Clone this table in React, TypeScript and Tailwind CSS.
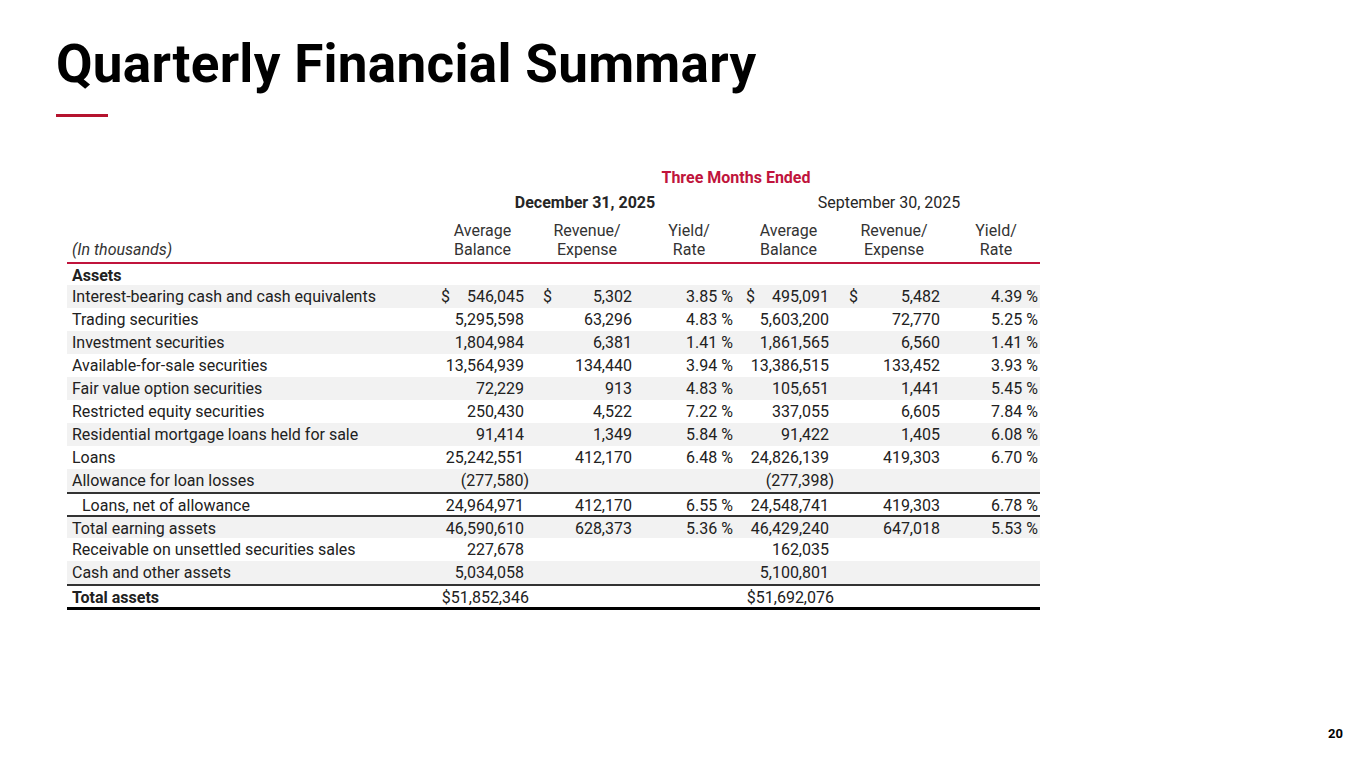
import React from "react";

const cols = "grid grid-cols-[365px_98px_108px_100px_98px_110px_94px]";

type Row = {
  label: string;
  v: (string | null)[];
  dollar?: boolean[];
  bg?: boolean;
  border?: boolean;
  bold?: boolean;
  indent?: boolean;
};

const rows: Row[] = [
  { label: "Interest-bearing cash and cash equivalents", v: ["546,045", "5,302", "3.85 %", "495,091", "5,482", "4.39 %"], dollar: [true, true, false, true, true, false], bg: true },
  { label: "Trading securities", v: ["5,295,598", "63,296", "4.83 %", "5,603,200", "72,770", "5.25 %"] },
  { label: "Investment securities", v: ["1,804,984", "6,381", "1.41 %", "1,861,565", "6,560", "1.41 %"], bg: true },
  { label: "Available-for-sale securities", v: ["13,564,939", "134,440", "3.94 %", "13,386,515", "133,452", "3.93 %"] },
  { label: "Fair value option securities", v: ["72,229", "913", "4.83 %", "105,651", "1,441", "5.45 %"], bg: true },
  { label: "Restricted equity securities", v: ["250,430", "4,522", "7.22 %", "337,055", "6,605", "7.84 %"] },
  { label: "Residential mortgage loans held for sale", v: ["91,414", "1,349", "5.84 %", "91,422", "1,405", "6.08 %"], bg: true },
  { label: "Loans", v: ["25,242,551", "412,170", "6.48 %", "24,826,139", "419,303", "6.70 %"] },
  { label: "Allowance for loan losses", v: ["(277,580)", null, null, "(277,398)", null, null], bg: true },
  { label: "Loans, net of allowance", v: ["24,964,971", "412,170", "6.55 %", "24,548,741", "419,303", "6.78 %"], border: true, indent: true },
  { label: "Total earning assets", v: ["46,590,610", "628,373", "5.36 %", "46,429,240", "647,018", "5.53 %"], border: true, bg: true },
  { label: "Receivable on unsettled securities sales", v: ["227,678", null, null, "162,035", null, null] },
  { label: "Cash and other assets", v: ["5,034,058", null, null, "5,100,801", null, null], bg: true },
  { label: "Total assets", v: ["$51,852,346", null, null, "$51,692,076", null, null], border: true, bold: true },
];

const cellPad = [
  { pl: "pl-[9px]", pr: "pr-[6px]" },
  { pl: "pl-[13px]", pr: "pr-[6px]" },
  { pl: "pl-[0px]", pr: "pr-[5px]" },
  { pl: "pl-[8px]", pr: "pr-[7px]" },
  { pl: "pl-[13px]", pr: "pr-[6px]" },
  { pl: "pl-[0px]", pr: "pr-[2px]" },
];

function Cell({ value, dollar, idx }: { value: string | null; dollar?: boolean; idx: number }) {
  const p = cellPad[idx];
  if (!value) return <div />;
  const hang = value.startsWith("(") || value.startsWith("$");
  return (
    <div className={`flex justify-between items-center whitespace-nowrap ${p.pl} ${p.pr}`}>
      <span>{dollar ? "$" : ""}</span>
      <span className={hang ? "mr-[-5px]" : ""}>{value}</span>
    </div>
  );
}

export default function App() {
  return (
    <div
      className="w-[1365px] h-[769px] bg-white relative overflow-hidden text-[#212121]"
      style={{ fontFamily: "Roboto, 'Noto Sans', sans-serif" }}
    >
      <div className="pl-[56px] pt-[38px]">
        <h1 className="text-[53px] leading-[53px] font-bold text-black tracking-[0.3px] whitespace-nowrap">
          Quarterly Financial Summary
        </h1>
        <div className="mt-[23px] w-[52px] h-[3px] bg-[#b5132e]" />
      </div>

      <div className="ml-[67px] mt-[48px] w-[973px] text-[16px]">
        <div className={`${cols} h-[26px] items-center`}>
          <div />
          <div className="col-span-6 text-center font-bold text-[#c0143c]">Three Months Ended</div>
        </div>
        <div className={`${cols} h-[24px] items-center text-[#262626]`}>
          <div />
          <div className="col-span-3 text-center font-bold">December 31, 2025</div>
          <div className="col-span-3 text-center">September 30, 2025</div>
        </div>
        <div className={`${cols} h-[47px] items-end leading-[19px] pb-[3px] text-[#333]`}>
          <div className="pl-[5px] italic">(In thousands)</div>
          <div className="text-center pl-[3px]">Average<br />Balance</div>
          <div className="text-center pl-[6px]">Revenue/<br />Expense</div>
          <div className="text-center pl-[2px]">Yield/<br />Rate</div>
          <div className="text-center pl-[3px]">Average<br />Balance</div>
          <div className="text-center pl-[6px]">Revenue/<br />Expense</div>
          <div className="text-center pl-[6px]">Yield/<br />Rate</div>
        </div>
        <div className="h-[2px] bg-[#c0143c]" />
        <div className={`${cols} h-[21px] items-center`}>
          <div className="pl-[5px] font-bold">Assets</div>
        </div>
        {rows.map((r, i) => (
          <div
            key={i}
            className={`${cols} h-[23px] items-center ${r.bg ? "bg-[#f2f2f2]" : ""} ${r.border ? "border-t-2 border-[#333]" : ""}`}
          >
            <div className={`whitespace-nowrap ${r.indent ? "pl-[15px]" : "pl-[5px]"} ${r.bold ? "font-bold" : ""}`}>{r.label}</div>
            {r.v.map((val, j) => (
              <Cell key={j} value={val} dollar={r.dollar?.[j]} idx={j} />
            ))}
          </div>
        ))}
        <div className="h-[3px] bg-black" />
      </div>

      <div className="absolute right-[22px] top-[724px] text-[13px] font-bold text-black">20</div>
    </div>
  );
}
